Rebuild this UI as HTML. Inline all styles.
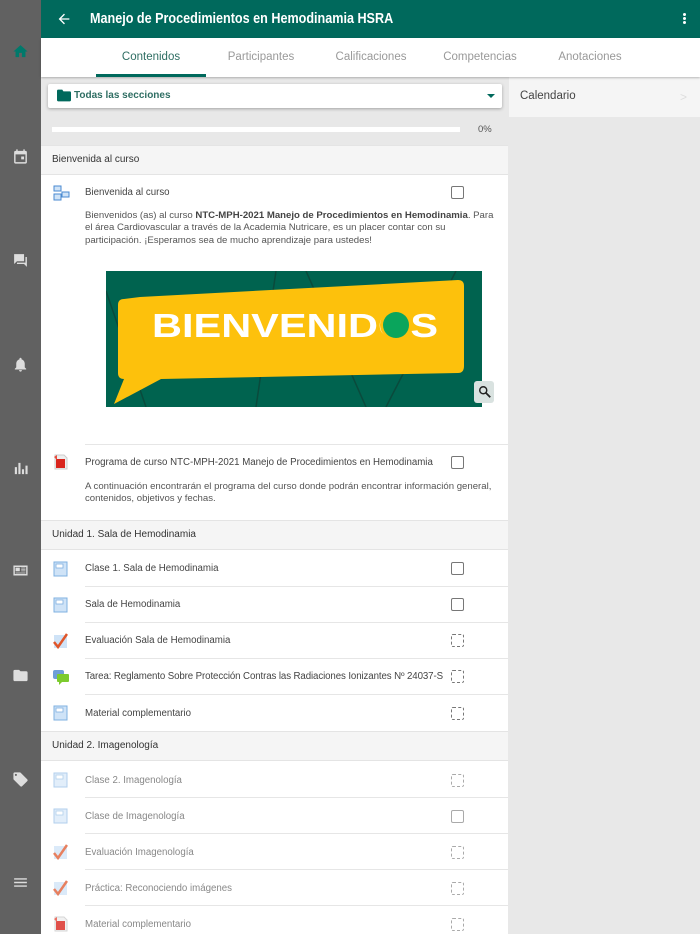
<!DOCTYPE html><html><head><meta charset="utf-8"><style>
*{margin:0;padding:0;box-sizing:border-box}
html,body{width:700px;height:934px;overflow:hidden}
body{font-family:"Liberation Sans",sans-serif;background:#e8e8e8;position:relative;font-size:11px;color:#333}
.a{position:absolute}
.side{left:0;top:0;width:41px;height:934px;background:#616161}
.hdr{left:41px;top:0;width:659px;height:38px;background:#00695c;color:#fff}
.tabs{left:41px;top:38px;width:659px;height:39px;background:#fff;box-shadow:0 1px 2px rgba(0,0,0,.25);z-index:2}
.tab{position:absolute;top:13px;font-size:11.5px;color:#999;width:110px;text-align:center}
.main{left:41px;top:145px;width:467px;height:789px;background:#fff}
.sec{left:41px;width:467px;height:30px;background:#f5f5f5;border-bottom:1px solid #e4e4e4;border-top:1px solid #e4e4e4;padding:8px 11px;font-size:10px;color:#333}
.row{left:85px;width:423px;height:36px;border-bottom:1px solid #e6e6e6}
.t{position:absolute;left:85px;font-size:9.7px;color:#444;white-space:nowrap}
.cb{position:absolute;left:451px;width:13px;height:13px;border:1.6px solid #777;border-radius:2px}
.cd{border-style:dashed}
.g{color:#888}
.g2{border-color:#aaa}
.ic{position:absolute;left:53px;width:15px;height:16px}
.si{position:absolute;left:12px;width:17px;height:17px}
</style></head><body>
<div class="a side">
<svg class="si" style="top:43px" viewBox="0 0 24 24"><path d="M10 20v-6h4v6h5v-8h3L12 3 2 12h3v8z" fill="#00796b"/></svg>
<svg class="si" style="top:148px" viewBox="0 0 24 24"><path d="M19 4h-1V2h-2v2H8V2H6v2H5a2 2 0 0 0-2 2v14a2 2 0 0 0 2 2h14a2 2 0 0 0 2-2V6a2 2 0 0 0-2-2zm0 16H5V9h14zm-6-8h4v4h-4z" fill="#ddd"/></svg>
<svg class="si" style="top:252px" viewBox="0 0 24 24"><path d="M3 3h14v10H7l-4 4zm16 4h2v14l-4-4H7v-2h12z" fill="#ddd"/></svg>
<svg class="si" style="top:356px" viewBox="0 0 24 24"><path d="M12 22a2 2 0 0 0 2-2h-4a2 2 0 0 0 2 2zm6-6V11c0-3-1.6-5.6-4.5-6.3V4a1.5 1.5 0 0 0-3 0v.7C7.6 5.4 6 8 6 11v5l-2 2v1h16v-1z" fill="#ddd"/></svg>
<svg class="si" style="top:460px" viewBox="0 0 24 24"><path d="M4 20V10h3v10zm5 0V4h3v16zm5 0v-7h3v7zm5 0V8h3v12z" fill="#ddd"/></svg>
<svg class="si" style="top:562px;width:19px;left:11px" viewBox="0 0 24 24"><path d="M2 5h20v14H2zm2 2v10h16V7zm1 1h6v5H5zm8 0h6v1h-6zm0 2h6v1h-6zm0 2h6v1h-6zm-8 3h14v1H5z" fill="#ddd"/></svg>
<svg class="si" style="top:667px" viewBox="0 0 24 24"><path d="M10 4H4a2 2 0 0 0-2 2v12a2 2 0 0 0 2 2h16a2 2 0 0 0 2-2V8a2 2 0 0 0-2-2h-8z" fill="#ddd"/></svg>
<svg class="si" style="top:771px" viewBox="0 0 24 24"><path d="M21.4 11.6l-9-9A2 2 0 0 0 11 2H4a2 2 0 0 0-2 2v7c0 .6.2 1.1.6 1.4l9 9a2 2 0 0 0 2.8 0l7-7a2 2 0 0 0 0-2.8zM5.5 7A1.5 1.5 0 1 1 7 5.5 1.5 1.5 0 0 1 5.5 7z" fill="#ddd"/></svg>
<svg class="si" style="top:874px" viewBox="0 0 24 24"><path d="M3 6h18v2H3zm0 5h18v2H3zm0 5h18v2H3z" fill="#ddd"/></svg>
</div>
<div class="a hdr">
<svg class="a" style="left:15px;top:11px" width="16" height="16" viewBox="0 0 24 24"><path d="M20 11H7.8l5.6-5.6L12 4l-8 8 8 8 1.4-1.4L7.8 13H20z" fill="#fff"/></svg>
<div class="a" style="left:49px;top:10px;font-size:15px;font-weight:bold;white-space:nowrap;transform:scaleX(.84);transform-origin:left">Manejo de Procedimientos en Hemodinamia HSRA</div>
<div class="a" style="left:642px;top:13px;width:3px;height:3px;background:#fff;border-radius:50%;box-shadow:0 4px 0 #fff,0 8px 0 #fff"></div>
</div>
<div class="a tabs">
<div class="tab" style="left:55px;color:#2f6e63">Contenidos</div>
<div class="a" style="left:55px;top:36px;width:110px;height:3px;background:#00695c"></div>
<div class="tab" style="left:165px">Participantes</div>
<div class="tab" style="left:275px">Calificaciones</div>
<div class="tab" style="left:384px">Competencias</div>
<div class="tab" style="left:494px">Anotaciones</div>
</div>
<div class="a" style="left:48px;top:84px;width:454px;height:24px;background:#fff;box-shadow:0 1px 3px rgba(0,0,0,.3);border-radius:2px">
<svg class="a" style="left:9px;top:5px" width="14" height="13" viewBox="0 0 24 22"><path d="M9 1H2a2 2 0 0 0-2 2v16a2 2 0 0 0 2 2h20a2 2 0 0 0 2-2V6a2 2 0 0 0-2-2H11z" fill="#00695c"/></svg>
<div class="a" style="left:26px;top:6px;font-size:10px;font-weight:bold;color:#2f6e63">Todas las secciones</div>
<div class="a" style="left:439px;top:10px;border:4px solid transparent;border-top:4px solid #00695c;border-bottom:0"></div>
</div>
<div class="a" style="left:52px;top:127px;width:408px;height:5px;background:#fff"></div>
<div class="a" style="left:478px;top:124px;font-size:9.5px;color:#555">0%</div>
<div class="a" style="left:509px;top:77px;width:191px;height:40px;background:#f5f5f5"></div>
<div class="a" style="left:520px;top:90px;font-size:11.5px;color:#444">Calendario</div>
<div class="a" style="left:680px;top:90px;color:#ddd;font-size:12px">&gt;</div>
<div class="a main"></div>
<div class="a sec" style="top:145px">Bienvenida al curso</div>
<svg class="ic" style="top:185px;width:17px" viewBox="0 0 17 16"><rect x="1" y="1" width="7" height="5" fill="#cfe3f7" stroke="#4a8ad0"/><rect x="9" y="7" width="7" height="5" fill="#cfe3f7" stroke="#4a8ad0"/><rect x="1" y="9" width="7" height="6" fill="#cfe3f7" stroke="#4a8ad0"/></svg>
<div class="t" style="top:187px">Bienvenida al curso</div><div class="cb" style="top:186px"></div>
<div class="a" style="left:85px;top:210px;width:412px;font-size:9.6px;line-height:12.3px;color:#555">Bienvenidos (as) al curso <b style="color:#444">NTC-MPH-2021 Manejo de Procedimientos en Hemodinamia</b>. Para el área Cardiovascular a través de la Academia Nutricare, es un placer contar con su participación. ¡Esperamos sea de mucho aprendizaje para ustedes!</div>
<div class="a" style="left:106px;top:271px;width:376px;height:136px;background:#00634f;overflow:hidden">
<svg class="a" style="left:0;top:0" width="376" height="136"><path d="M0 20L40 136M170 0L150 136M200 0L260 136M350 0L280 136" stroke="#0a4a3c" stroke-width="1.5" fill="none"/>
<path d="M34 26L352 9Q358 9 358 15L358 95Q358 102 352 102L55 108L8 133L18 108Q12 108 12 102L12 34Q12 28 18 28Z" fill="#fdc10c"/>
<text x="46" y="66" font-family="Liberation Sans, sans-serif" font-weight="bold" font-size="33" fill="#fff" textLength="286" lengthAdjust="spacingAndGlyphs">BIENVENIDOS</text>
<circle cx="288" cy="54" r="14" fill="#fdc10c"/>
<circle cx="290" cy="54" r="13" fill="#0aa55c"/></svg>
</div>
<div class="a" style="left:474px;top:381px;width:20px;height:22px;background:#d9e2e0;border-radius:3px"></div>
<svg class="a" style="left:478px;top:385px" width="14" height="14" viewBox="0 0 24 24"><circle cx="9" cy="9" r="6" stroke="#222" stroke-width="2.5" fill="none"/><path d="M13.5 13.5L21 21" stroke="#222" stroke-width="3"/></svg>
<div class="a" style="left:85px;top:444px;width:423px;border-top:1px solid #e6e6e6"></div>
<svg class="ic" style="top:454px" viewBox="0 0 15 16"><path d="M2 1h9l3 3v11H2z" fill="#eee" stroke="#ccc"/><rect x="3" y="5" width="9" height="9" fill="#d9251d"/><path d="M1 3l3-2v5z" fill="#e84c3d"/></svg>
<div class="t" style="top:457px">Programa de curso NTC-MPH-2021 Manejo de Procedimientos en Hemodinamia</div><div class="cb" style="top:456px"></div>
<div class="a" style="left:85px;top:481px;width:415px;font-size:9.6px;line-height:12.3px;color:#555">A continuación encontrarán el programa del curso donde podrán encontrar información general, contenidos, objetivos y fechas.</div>
<div class="a sec" style="top:520px">Unidad 1. Sala de Hemodinamia</div>
<div class="a row" style="top:551px"></div><div class="a row" style="top:587px"></div><div class="a row" style="top:623px"></div><div class="a row" style="top:659px"></div><div class="a row" style="top:695px;border:0"></div>
<svg class="ic" style="top:561px" viewBox="0 0 15 16"><path d="M1 1h13v14H1z" fill="#cfe3f7" stroke="#7fb0e0"/><rect x="3" y="3" width="7" height="4" fill="#fff" stroke="#7fb0e0" stroke-width=".8"/></svg>
<div class="t" style="top:563px">Clase 1. Sala de Hemodinamia</div><div class="cb" style="top:562px"></div>
<svg class="ic" style="top:597px" viewBox="0 0 15 16"><path d="M1 1h13v14H1z" fill="#cfe3f7" stroke="#7fb0e0"/><rect x="3" y="3" width="7" height="4" fill="#fff" stroke="#7fb0e0" stroke-width=".8"/></svg>
<div class="t" style="top:599px">Sala de Hemodinamia</div><div class="cb" style="top:598px"></div>
<svg class="ic" style="top:633px" viewBox="0 0 15 16"><path d="M1 2h13v13H1z" fill="#cfe3f7"/><path d="M1 9l4 5 9-13" stroke="#e0562a" stroke-width="2.5" fill="none"/></svg>
<div class="t" style="top:635px">Evaluación Sala de Hemodinamia</div><div class="cb cd" style="top:634px"></div>
<svg class="ic" style="top:669px;width:17px" viewBox="0 0 17 16"><rect x="0" y="1" width="11" height="9" rx="2" fill="#6f9fd8"/><rect x="4" y="5" width="12" height="8" rx="1" fill="#7ccb2e"/><path d="M6 13v3l3-3z" fill="#7ccb2e"/></svg>
<div class="t" style="top:671px;letter-spacing:-.1px">Tarea: Reglamento Sobre Protección Contras las Radiaciones Ionizantes Nº 24037-S</div><div class="cb cd" style="top:670px"></div>
<svg class="ic" style="top:705px" viewBox="0 0 15 16"><path d="M1 1h13v14H1z" fill="#cfe3f7" stroke="#7fb0e0"/><rect x="3" y="3" width="7" height="4" fill="#fff" stroke="#7fb0e0" stroke-width=".8"/></svg>
<div class="t" style="top:708px">Material complementario</div><div class="cb cd" style="top:707px"></div>
<div class="a sec" style="top:731px">Unidad 2. Imagenología</div>
<div class="a row" style="top:762px"></div><div class="a row" style="top:798px"></div><div class="a row" style="top:834px"></div><div class="a row" style="top:870px"></div><div class="a row" style="top:906px;border:0"></div>
<svg class="ic" style="top:772px;opacity:.6" viewBox="0 0 15 16"><path d="M1 1h13v14H1z" fill="#cfe3f7" stroke="#7fb0e0"/><rect x="3" y="3" width="7" height="4" fill="#fff" stroke="#7fb0e0" stroke-width=".8"/></svg>
<div class="t g" style="top:775px">Clase 2. Imagenología</div><div class="cb cd g2" style="top:774px"></div>
<svg class="ic" style="top:808px;opacity:.6" viewBox="0 0 15 16"><path d="M1 1h13v14H1z" fill="#cfe3f7" stroke="#7fb0e0"/><rect x="3" y="3" width="7" height="4" fill="#fff" stroke="#7fb0e0" stroke-width=".8"/></svg>
<div class="t g" style="top:811px">Clase de Imagenología</div><div class="cb g2" style="top:810px"></div>
<svg class="ic" style="top:844px;opacity:.75" viewBox="0 0 15 16"><path d="M1 2h13v13H1z" fill="#cfe3f7"/><path d="M1 9l4 5 9-13" stroke="#e0562a" stroke-width="2.5" fill="none"/></svg>
<div class="t g" style="top:847px">Evaluación Imagenología</div><div class="cb cd g2" style="top:846px"></div>
<svg class="ic" style="top:880px;opacity:.75" viewBox="0 0 15 16"><path d="M1 2h13v13H1z" fill="#cfe3f7"/><path d="M1 9l4 5 9-13" stroke="#e0562a" stroke-width="2.5" fill="none"/></svg>
<div class="t g" style="top:883px">Práctica: Reconociendo imágenes</div><div class="cb cd g2" style="top:882px"></div>
<svg class="ic" style="top:916px;opacity:.8" viewBox="0 0 15 16"><path d="M2 1h9l3 3v11H2z" fill="#eee" stroke="#ccc"/><rect x="3" y="5" width="9" height="9" fill="#d9251d"/><path d="M1 3l3-2v5z" fill="#e84c3d"/></svg>
<div class="t g" style="top:919px">Material complementario</div><div class="cb cd g2" style="top:918px"></div>
</body></html>
